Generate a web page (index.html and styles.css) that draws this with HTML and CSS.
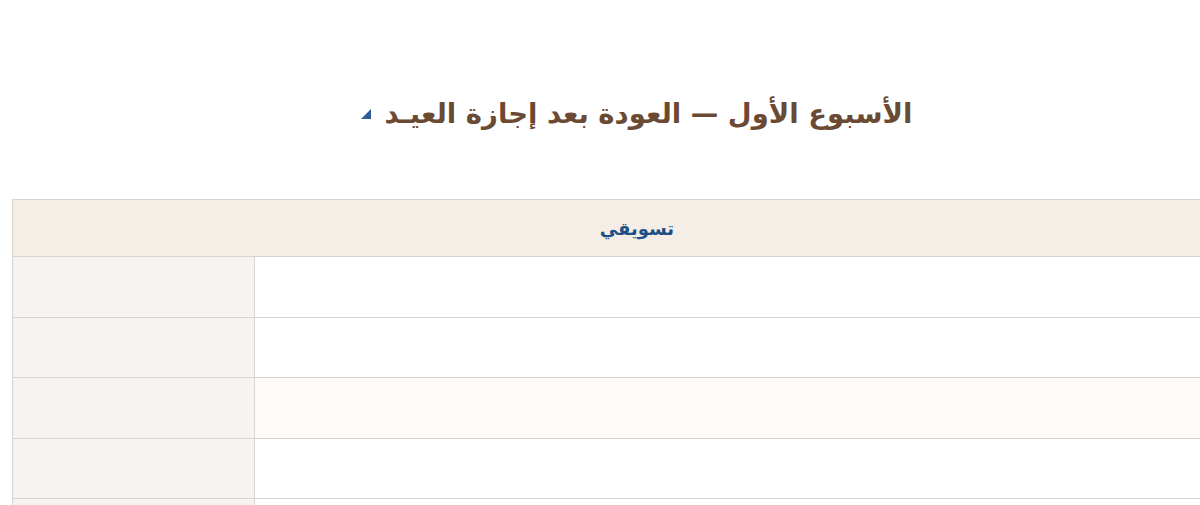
FILE: index.html
```html
<!DOCTYPE html>
<html lang="ar" dir="rtl">
<head>
<meta charset="utf-8">
<link rel="stylesheet" href="styles.css">
</head>
<body>
<div class="page">
  <div class="title-row">
    <h2 class="title">الأسبوع الأول — العودة بعد إجازة العيـد</h2>
    <svg class="marker" width="10" height="10" viewBox="0 0 10 10"><polygon points="10,0 10,10 0,10" fill="#2f5d9a"/></svg>
  </div>
  <table class="grid">
    <colgroup>
      <col class="col-main">
      <col class="col-side">
    </colgroup>
    <thead>
      <tr><th colspan="2" class="head">تسويقي</th></tr>
    </thead>
    <tbody>
      <tr><td class="main"></td><td class="side"></td></tr>
      <tr><td class="main"></td><td class="side"></td></tr>
      <tr class="alt"><td class="main"></td><td class="side"></td></tr>
      <tr><td class="main"></td><td class="side"></td></tr>
      <tr><td class="main"></td><td class="side"></td></tr>
    </tbody>
  </table>
</div>
</body>
</html>
```

FILE: styles.css
```css
html, body {
  margin: 0;
  padding: 0;
  background: #ffffff;
  overflow: hidden;
}
body {
  font-family: "DejaVu Sans", "Noto Sans", sans-serif;
  direction: ltr;
}
.page {
  width: 1250px;
  padding: 0 12px;
  direction: rtl;
}
.title-row {
  display: flex;
  justify-content: center;
  align-items: center;
  gap: 13px;
  padding-top: 89px;
  height: 48px;
  margin-bottom: 62px;
}
.title {
  margin: 0;
  font-size: 27.5px;
  font-weight: bold;
  color: #6b4a33;
  line-height: 48px;
}
.marker {
  display: block;
  margin-top: 2px;
}
.grid {
  width: 100%;
  border-collapse: collapse;
  table-layout: fixed;
}
.col-side {
  width: 242px;
}
.grid th, .grid td {
  border: 1px solid #d8d5d0;
  padding: 0;
}
.head {
  height: 56px;
  background: #f5eee7;
  color: #1f4e85;
  font-size: 18px;
  font-weight: bold;
  text-align: center;
}
.grid td {
  height: 59.5px;
}
.main {
  background: #ffffff;
}
.alt .main {
  background: #fdfcf9;
}
.side {
  background: #f5f4f0;
}
```
